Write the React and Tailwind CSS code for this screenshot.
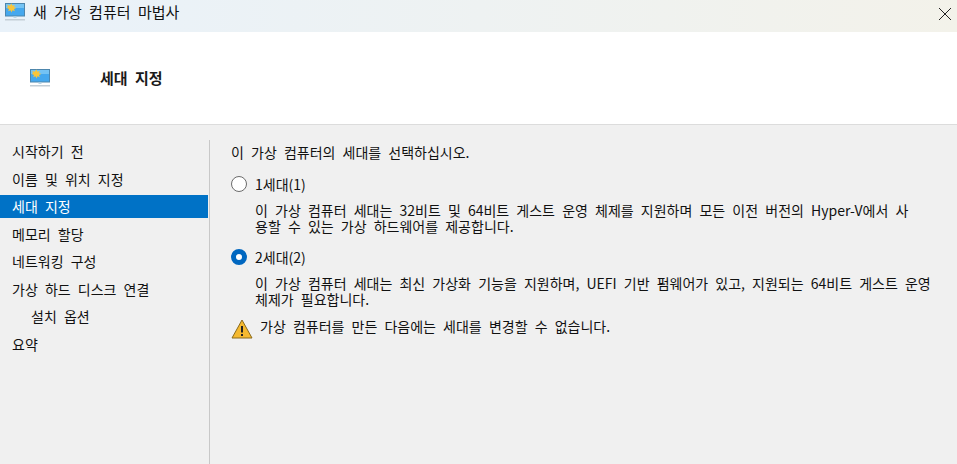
const steps = [
  { label: "시작하기 전" },
  { label: "이름 및 위치 지정" },
  { label: "세대 지정", active: true },
  { label: "메모리 할당" },
  { label: "네트워킹 구성" },
  { label: "가상 하드 디스크 연결" },
  { label: "설치 옵션", sub: true },
  { label: "요약" },
];

function MonitorIcon({ className }) {
  return (
    <svg viewBox="0 0 20 18" className={className}>
      <rect x="0.5" y="0.5" width="19" height="12.5" fill="#45a8ee" stroke="#4d86ad" />
      <rect x="1" y="1" width="18" height="4" fill="#74c3f4" />
      <path d="M6.5 0.5l1 2.2 2.3-1-.8 2.4 2.3.9-2.3.9.8 2.4-2.3-1-1 2.2-1-2.2-2.3 1 .8-2.4-2.3-.9L3 4.1l-.8-2.4 2.3 1z" fill="#f9c53a" />
      <rect x="8.5" y="13.5" width="3" height="1.5" fill="#b9d5e6" />
      <rect x="0" y="16" width="20" height="1.5" fill="#c3ced6" />
    </svg>
  );
}

function Radio({ checked }) {
  if (checked) {
    return <span className="block w-4 h-4 rounded-full border-[5px] border-[#0067c0] bg-white" />;
  }
  return <span className="block w-4 h-4 rounded-full border border-[#6b6b6b] bg-white" />;
}

function Option({ checked, title, children, className }) {
  return (
    <div className={className}>
      <div className="flex items-center gap-2">
        <Radio checked={checked} />
        <span className="leading-[20px]">{title}</span>
      </div>
      <p className="ml-6 mt-[8px] leading-[16px] whitespace-nowrap">{children}</p>
    </div>
  );
}

export default function App() {
  return (
    <div
      className="w-[957px] h-[464px] overflow-hidden flex flex-col bg-[#f0f0f0] text-[14px] text-[#111] [word-spacing:4px]"
      style={{ fontFamily: '"Noto Sans CJK KR", sans-serif' }}
    >
      {/* title bar */}
      <div className="h-8 flex items-start bg-gradient-to-r from-[#e9f2fa] to-[#f3f2ea] pl-[5px] pr-[4px]">
        <MonitorIcon className="w-5 h-[18px] mt-[3px]" />
        <span className="ml-2 mt-[2px] text-[15px] leading-[20px] text-[#111]">새 가상 컴퓨터 마법사</span>
        <svg viewBox="0 0 14 14" className="ml-auto w-[14px] h-[14px] mt-[7px] mr-px">
          <path d="M1 1l12 12M13 1L1 13" stroke="#222" strokeWidth="1" fill="none" />
        </svg>
      </div>

      {/* header */}
      <div className="h-[93px] flex items-center bg-white border-b border-[#dcdcdc] pl-[30px]">
        <MonitorIcon className="w-5 h-[18px]" />
        <h1 className="ml-[50px] text-[15px] font-bold text-[#1a1a1a]">세대 지정</h1>
      </div>

      <div className="flex-1 flex">
        {/* steps */}
        <ul className="w-[208px] pt-[15px] flex flex-col gap-[4.5px]">
          {steps.map((s) => (
            <li
              key={s.label}
              className={
                "h-[23px] flex items-center " +
                (s.sub ? "pl-[31px] " : "pl-[12px] ") +
                (s.active ? "bg-[#0072c6] text-white" : "")
              }
            >
              {s.label}
            </li>
          ))}
        </ul>

        {/* content */}
        <div className="flex-1 mt-[15px] ml-px border-l border-[#c8c8c8] pl-[21px]">
          <p className="leading-[16px] mt-[4px]">이 가상 컴퓨터의 세대를 선택하십시오.</p>
          <Option title="1세대(1)" className="mt-[14px]">
            이 가상 컴퓨터 세대는 32비트 및 64비트 게스트 운영 체제를 지원하며 모든 이전 버전의 Hyper-V에서 사
            <br />
            용할 수 있는 가상 하드웨어를 제공합니다.
          </Option>
          <Option checked title="2세대(2)" className="mt-[13px]">
            이 가상 컴퓨터 세대는 최신 가상화 기능을 지원하며, UEFI 기반 펌웨어가 있고, 지원되는 64비트 게스트 운영
            <br />
            체제가 필요합니다.
          </Option>
          <div className="flex items-start gap-[7px] mt-[11px]">
            <svg viewBox="0 0 22 20" className="w-[22px] h-5 mt-[1px]">
              <path d="M11 1L21 19H1z" fill="#f5b92f" stroke="#8a6a1c" strokeLinejoin="round" />
              <rect x="10" y="7" width="2" height="6.5" fill="#222" />
              <rect x="10" y="15" width="2" height="2" fill="#222" />
            </svg>
            <span className="leading-[16px]">가상 컴퓨터를 만든 다음에는 세대를 변경할 수 없습니다.</span>
          </div>
        </div>
      </div>
    </div>
  );
}
